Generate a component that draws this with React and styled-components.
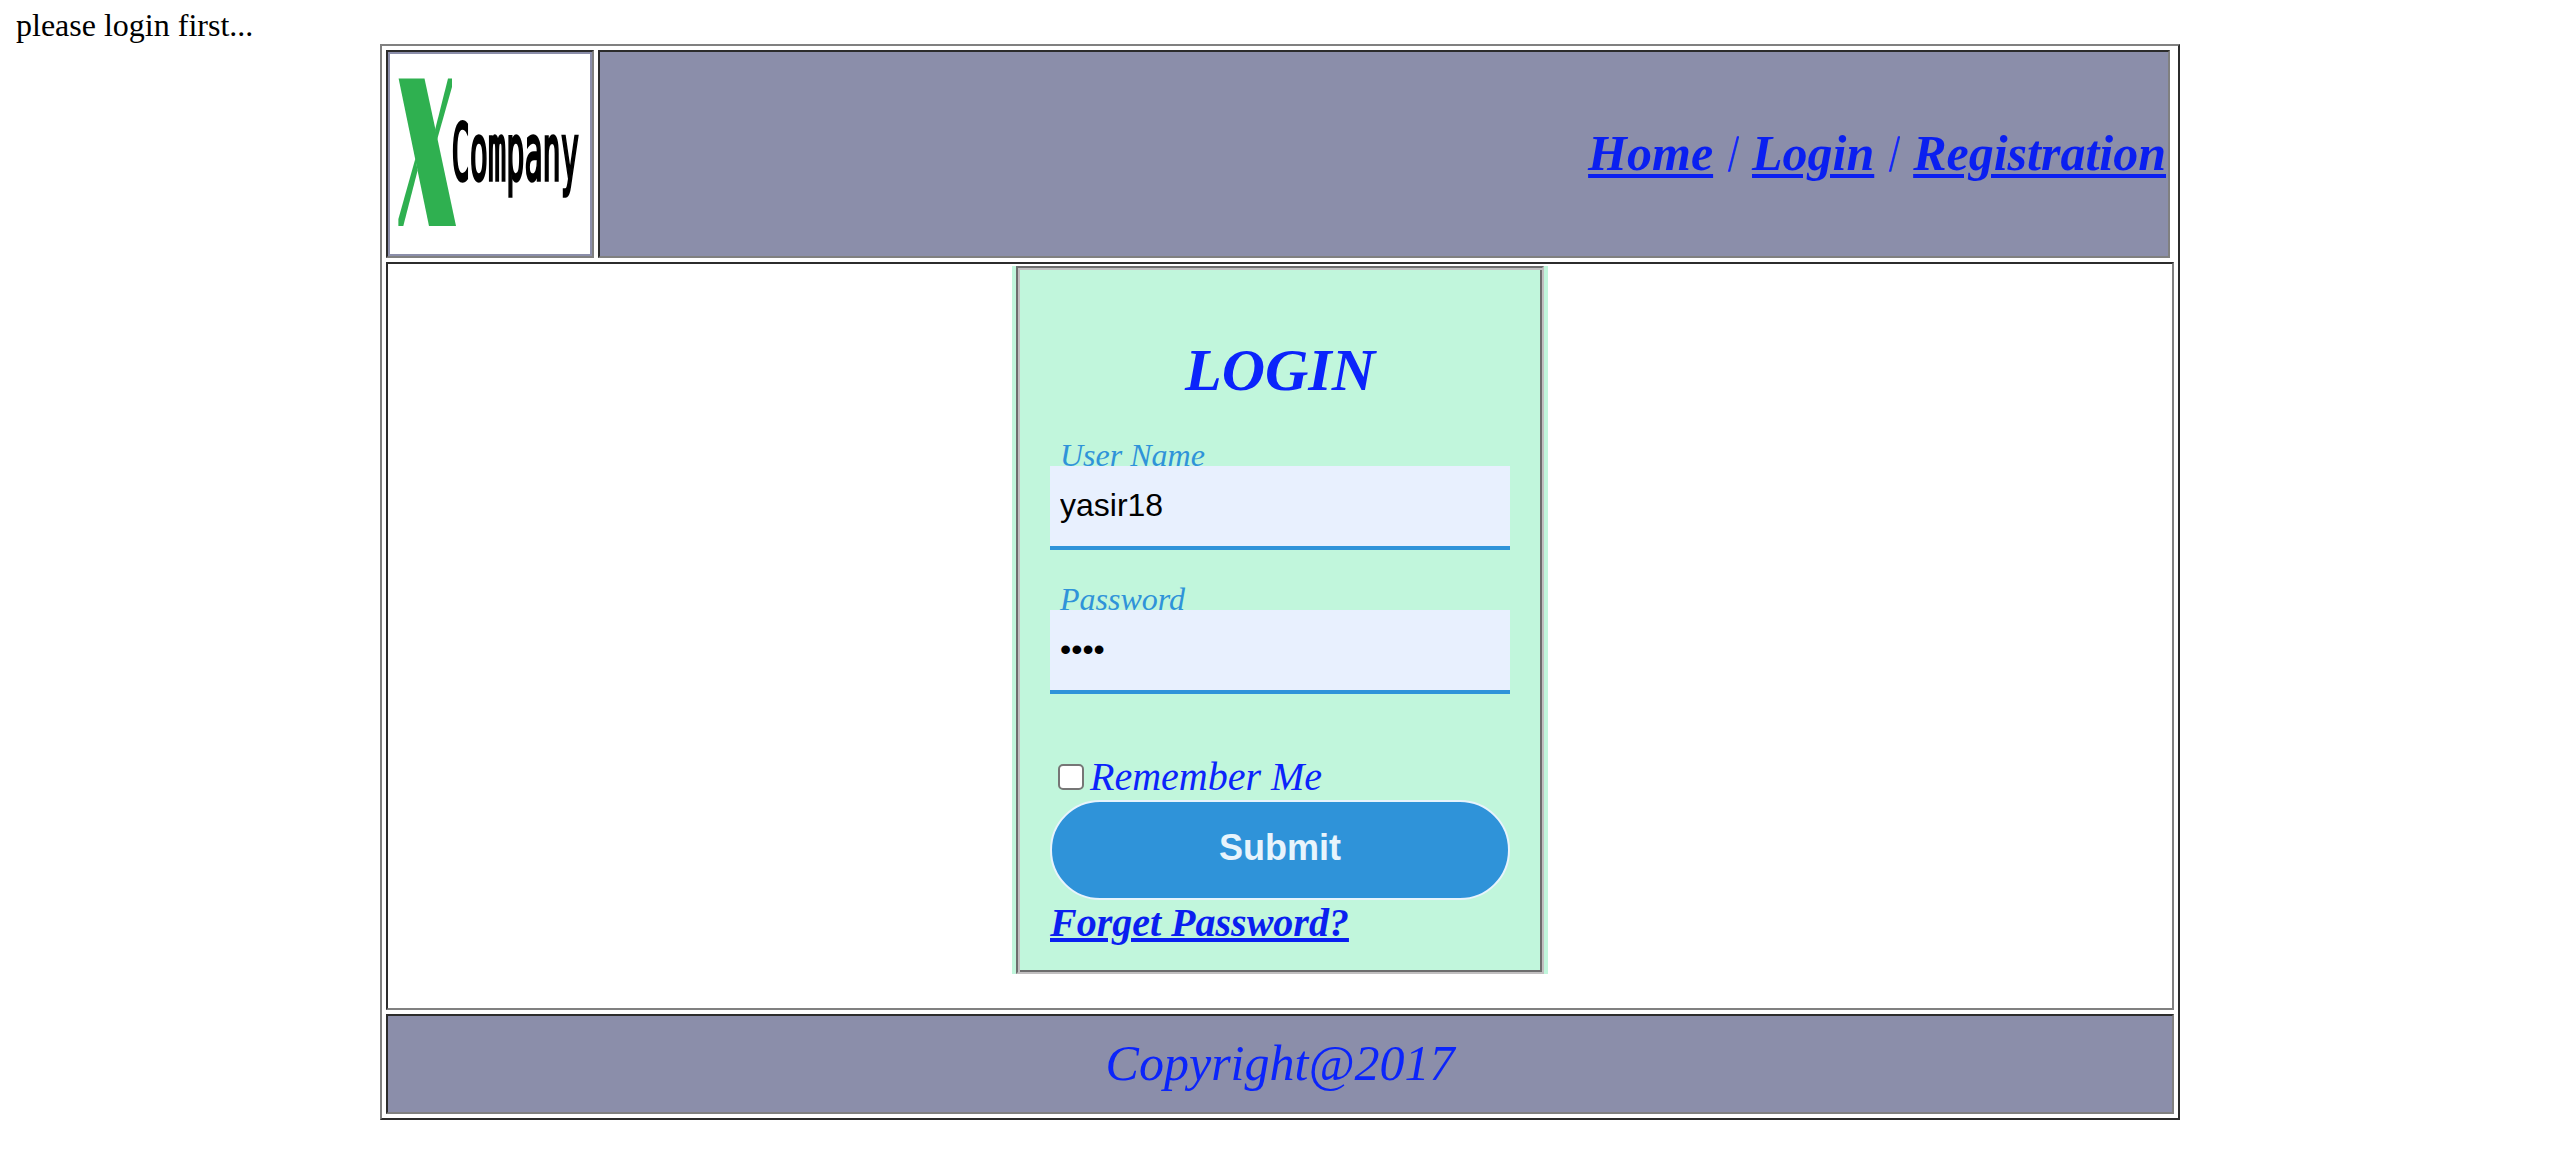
import React from "react";
import styled, { createGlobalStyle } from "styled-components";

const GlobalStyle = createGlobalStyle`
  * { box-sizing: border-box; }
  body {
    margin: 0;
    background: #fff;
    color: #000;
    font-family: "Liberation Serif", "Times New Roman", serif;
  }
`;

const Page = styled.div`
  display: flex;
  flex-direction: column;
  align-items: center;
  padding-top: 8px;
`;

const Notice = styled.div`
  align-self: stretch;
  height: 36px;
  padding-left: 16px;
  font-size: 32px;
  line-height: 34px;
  font-variant-ligatures: common-ligatures;
`;

const Frame = styled.div`
  display: flex;
  flex-direction: column;
  gap: 4px;
  width: 1800px;
  height: 1076px;
  padding: 4px;
  border: 2px solid;
  border-color: #808080 #2c2c2c #2c2c2c #808080;
`;

const Cell = styled.div`
  display: flex;
  padding: 2px;
  border: 2px solid;
  border-color: #2c2c2c #808080 #808080 #2c2c2c;
  background: ${(p) => (p.$tinted ? "#8b8eaa" : "transparent")};
`;

const HeaderRow = styled.header`
  display: flex;
  gap: 4px;
  height: 208px;
  padding-right: 4px;
`;

const LogoCell = styled(Cell)`
  width: 208px;
`;

const Logo = styled.svg`
  display: block;
  width: 200px;
  height: 200px;
  background: #fff;
`;

const NavCell = styled(Cell)`
  flex: 1;
  justify-content: flex-end;
  align-items: center;
`;

const Nav = styled.nav`
  padding-bottom: 2px;
  font-size: 50px;
  line-height: 58px;
  font-style: italic;
  color: #0b24fb;
  white-space: pre;
`;

const Slash = styled.span`
  display: inline-block;
  transform: scaleX(0.5);
  -webkit-text-stroke: 1.6px #0b24fb;
`;

const Link = styled.a`
  color: #0a1ff0;
  font-weight: bold;
  text-decoration: underline;
  text-decoration-thickness: 4px;
  text-underline-offset: ${(p) => p.$offset}px;
`;

const Main = styled(Cell)`
  height: 748px;
  justify-content: center;
  align-items: flex-start;
`;

const FormBackdrop = styled.div`
  width: 536px;
  padding: 0 4px;
  background: #c1f6dc;
`;

const Form = styled.form`
  display: flex;
  flex-direction: column;
  height: 708px;
  padding: 0 32px;
  border: 2px solid;
  border-color: #6d6d6d #c1bfc0 #c1bfc0 #6d6d6d;
  box-shadow: inset 2px 2px #c1bfc0, inset -2px -2px #6d6d6d;
  color: #0b24fb;
  font-style: italic;
`;

const Title = styled.h1`
  margin: 67px 0 0;
  font-size: 60px;
  line-height: 70px;
  text-align: center;
`;

const Label = styled.label`
  z-index: 1;
  height: 28px;
  margin-top: ${(p) => p.$gap}px;
  padding-left: 10px;
  font-size: 32px;
  line-height: 34px;
  color: #2f93d9;
`;

const Input = styled.input`
  flex: none;
  width: 460px;
  height: 84px;
  padding: 0 10px 2px;
  border: 0;
  border-bottom: 4px solid #2f93d9;
  border-radius: 0;
  outline: 0;
  background: #e8f0fe;
  color: #000;
  font: 32px "Liberation Sans", Arial, sans-serif;
`;

const Remember = styled.label`
  display: flex;
  align-items: center;
  gap: 6px;
  height: 46px;
  margin-top: 60px;
  padding-left: 8px;
  font-size: 40px;
  line-height: 46px;
`;

const Checkbox = styled.input`
  appearance: none;
  width: 26px;
  height: 26px;
  margin: 0;
  border: 2px solid #767676;
  border-radius: 5px;
  background: #fff;
`;

const Submit = styled.button`
  flex: none;
  height: 100px;
  padding: 0 0 4px;
  border: 2px solid #e8f4fc;
  border-radius: 50px;
  background: #2f93d9;
  color: #e8f4fc;
  font: bold 36px "Liberation Sans", Arial, sans-serif;
`;

const Forget = styled.div`
  font-size: 40px;
  line-height: 46px;
`;

const Footer = styled(Cell)`
  height: 100px;
  padding-bottom: 4px;
  justify-content: center;
  align-items: center;
  font-size: 50px;
  line-height: 58px;
  font-style: italic;
  color: #0b24fb;
`;

function CompanyLogo() {
  return (
    <Logo viewBox="390 54 200 200" role="img">
      <g fill="#2fb050">
        <path d="M398.6 78.5H424.5L437.5 139L456 226H429L398.6 78.5Z" />
        <path d="M448 78.5H452V87L437 140L435 130Z" />
        <path d="M415.5 158L417.6 170.5L403.3 226H398.4V219Z" />
      </g>
      <text
        transform="translate(451.5 180) scale(0.388 1)"
        fontFamily="DejaVu Sans Mono, monospace"
        fontSize="78"
        stroke="#000"
        strokeWidth="3.5"
      >
        Company
      </text>
    </Logo>
  );
}

export default function App() {
  return (
    <>
      <GlobalStyle />
      <Page>
        <Notice>please login first...</Notice>
        <Frame>
          <HeaderRow>
            <LogoCell $tinted>
              <CompanyLogo />
            </LogoCell>
            <NavCell $tinted>
              <Nav>
                <Link href="#home" $offset={4}>Home</Link> <Slash>/</Slash>{" "}
                <Link href="#login" $offset={4}>Login</Link> <Slash>/</Slash>{" "}
                <Link href="#registration" $offset={4}>Registration</Link>
              </Nav>
            </NavCell>
          </HeaderRow>
          <Main>
            <FormBackdrop>
              <Form>
                <Title>LOGIN</Title>
                <Label htmlFor="user" $gap={33}>User Name</Label>
                <Input id="user" type="text" defaultValue="yasir18" />
                <Label htmlFor="pass" $gap={32}>Password</Label>
                <Input id="pass" type="password" defaultValue="1234" />
                <Remember>
                  <Checkbox type="checkbox" />
                  Remember Me
                </Remember>
                <Submit type="button">Submit</Submit>
                <Forget>
                  <Link href="#forget" $offset={2}>Forget Password?</Link>
                </Forget>
              </Form>
            </FormBackdrop>
          </Main>
          <Footer as="footer" $tinted>Copyright@2017</Footer>
        </Frame>
      </Page>
    </>
  );
}
